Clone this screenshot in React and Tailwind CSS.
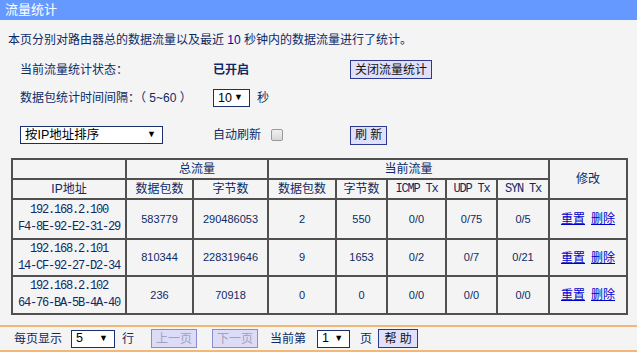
import React from "react";

const rows = [
  { ip: "192.168.2.100", mac: "F4-8E-92-E2-31-29", tp: "583779", tb: "290486053", cp: "2", cb: "550", icmp: "0/0", udp: "0/75", syn: "0/5", h: "h-[40px]" },
  { ip: "192.168.2.101", mac: "14-CF-92-27-D2-34", tp: "810344", tb: "228319646", cp: "9", cb: "1653", icmp: "0/2", udp: "0/7", syn: "0/21", h: "h-[37px]" },
  { ip: "192.168.2.102", mac: "64-76-BA-5B-4A-40", tp: "236", tb: "70918", cp: "0", cb: "0", icmp: "0/0", udp: "0/0", syn: "0/0", h: "h-[38px]" },
];

const cjk = "font-['Liberation_Sans','Noto_Sans_CJK_SC',sans-serif]";
const mono = "font-['Liberation_Mono','Noto_Sans_CJK_SC',monospace] text-[12px] tracking-[-1.2px]";
const td = "border-2 border-[#505050] text-center p-0";

const Btn = ({ children, className = "", disabled }) => (
  <button
    className={
      "h-[19px] px-[4px] border leading-[16px] text-[12px] " +
      (disabled
        ? "bg-[#dcdcf6] border-[#8a8ad0] text-[#a0a0c0] "
        : "bg-[#e0e0fa] border-[#2b3a8f] text-[#111] ") +
      className
    }
  >
    {children}
  </button>
);

const Select = ({ value, className = "" }) => (
  <div
    className={
      "h-[18px] bg-white border border-[#1b2f6e] flex items-center justify-between pl-[4px] pr-[6px] text-[12.5px] text-black " +
      className
    }
  >
    <span>{value}</span>
    <span className="text-[9px]">▼</span>
  </div>
);

export default function App() {
  return (
    <div className={"w-[637px] h-[352px] bg-[#f4f4f4] overflow-hidden text-[#0d2a66] text-[12px] " + cjk}>
      <div className="h-[20px] bg-[#6699ff] text-white text-[13px] leading-[20px] px-[5px]">流量统计</div>

      <div className="mt-[11px] h-[18px] leading-[18px] pl-[8px]">
        本页分别对路由器总的数据流量以及最近 <span className="text-[#0000aa]">10</span> 秒钟内的数据流量进行了统计。
      </div>

      <div className="mt-[11px] h-[19px] flex items-center pl-[20px]">
        <div className="w-[193px]">当前流量统计状态：</div>
        <div className="w-[137px] font-bold">已开启</div>
        <Btn>关闭流量统计</Btn>
      </div>

      <div className="mt-[10px] h-[18px] flex items-center pl-[20px]">
        <div className="w-[193px]">数据包统计时间间隔：（ 5~60 ）</div>
        <Select value="10" className="w-[37px]" />
        <div className="ml-[7px]">秒</div>
      </div>

      <div className="mt-[19px] h-[18px] flex items-center pl-[20px]">
        <Select value="按IP地址排序" className="w-[143px]" />
        <div className="ml-[50px] w-[58px]">自动刷新</div>
        <div className="w-[12px] h-[12px] rounded-[2px] border border-[#999] bg-gradient-to-b from-[#f0f0f0] to-[#d8d8d8]" />
        <div className="ml-[67px]">
          <Btn>刷 新</Btn>
        </div>
      </div>

      <table className="mt-[14px] ml-[11px] w-[615px] border-collapse table-fixed">
        <colgroup>
          <col className="w-[114px]" />
          <col className="w-[67px]" />
          <col className="w-[75px]" />
          <col className="w-[68px]" />
          <col className="w-[51px]" />
          <col className="w-[59px]" />
          <col className="w-[51px]" />
          <col className="w-[52px]" />
          <col className="w-[78px]" />
        </colgroup>
        <tbody>
          <tr className="h-[20px]">
            <td className={td}></td>
            <td className={td} colSpan={2}>总流量</td>
            <td className={td} colSpan={5}>当前流量</td>
            <td className={td} rowSpan={2}>修改</td>
          </tr>
          <tr className="h-[19px]">
            <td className={td}>IP地址</td>
            <td className={td}>数据包数</td>
            <td className={td}>字节数</td>
            <td className={td}>数据包数</td>
            <td className={td}>字节数</td>
            <td className={td + " " + mono}>ICMP Tx</td>
            <td className={td + " " + mono}>UDP Tx</td>
            <td className={td + " " + mono}>SYN Tx</td>
          </tr>
          {rows.map((r) => (
            <tr key={r.ip} className={r.h}>
              <td className={td + " " + mono + " leading-[17px]"}>
                <div>{r.ip}</div>
                <div>{r.mac}</div>
              </td>
              <td className={td + " text-[11px]"}>{r.tp}</td>
              <td className={td + " text-[11px]"}>{r.tb}</td>
              <td className={td + " text-[11px]"}>{r.cp}</td>
              <td className={td + " text-[11px]"}>{r.cb}</td>
              <td className={td + " text-[11px]"}>{r.icmp}</td>
              <td className={td + " text-[11px]"}>{r.udp}</td>
              <td className={td + " text-[11px]"}>{r.syn}</td>
              <td className={td}>
                <a className="text-[#0000cc] underline">重置</a>
                <a className="text-[#0000cc] underline ml-[6px]">删除</a>
              </td>
            </tr>
          ))}
        </tbody>
      </table>

      <div className="mt-[10px] h-[27px] border-y-2 border-[#f2b878] flex items-center pl-[14px]">
        <div>每页显示</div>
        <Select value="5" className="w-[44px] ml-[9px]" />
        <div className="ml-[7px]">行</div>
        <Btn disabled className="ml-[17px] w-[46px]">上一页</Btn>
        <Btn disabled className="ml-[15px] w-[46px]">下一页</Btn>
        <div className="ml-[12px]">当前第</div>
        <Select value="1" className="w-[33px] ml-[11px]" />
        <div className="ml-[10px]">页</div>
        <Btn className="ml-[6px] w-[40px]">帮 助</Btn>
      </div>
    </div>
  );
}
